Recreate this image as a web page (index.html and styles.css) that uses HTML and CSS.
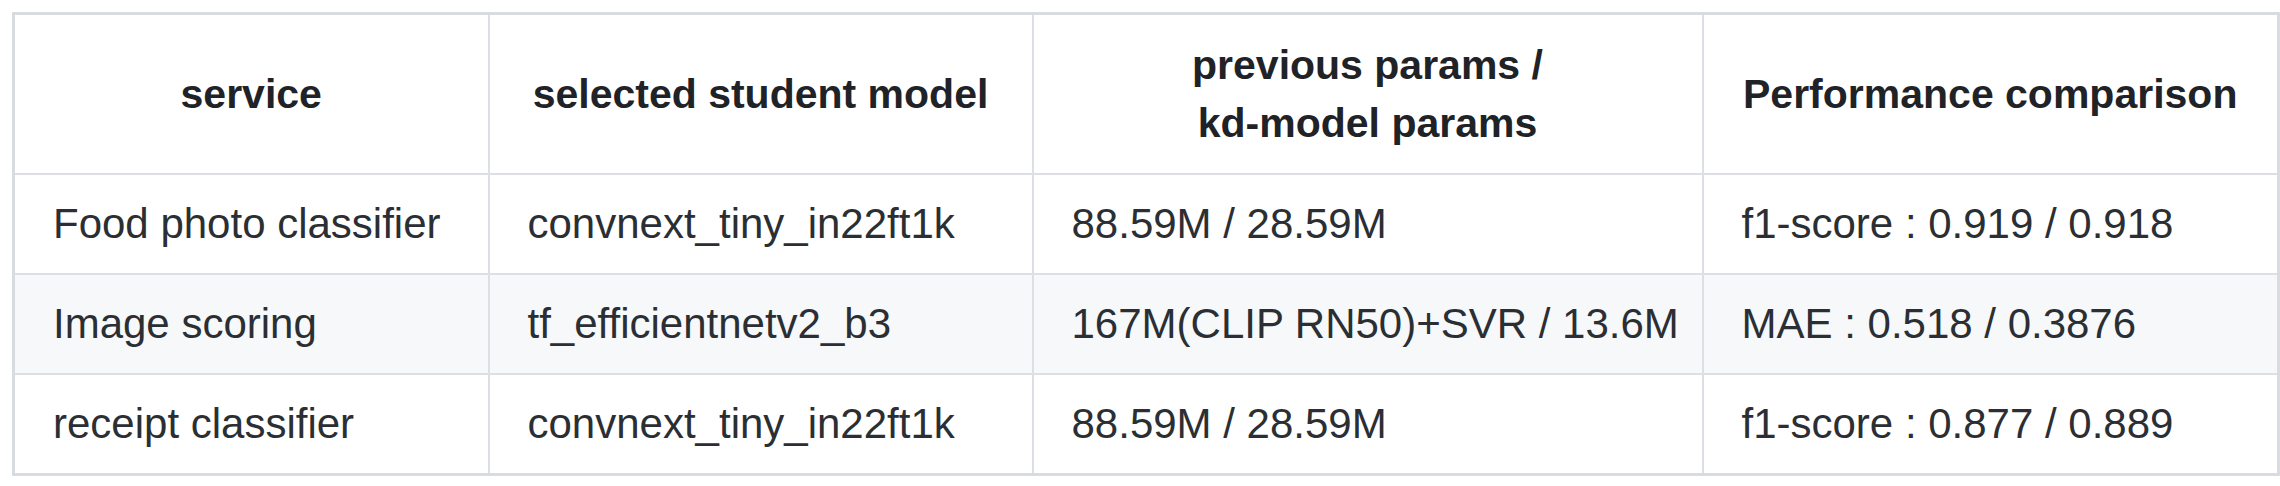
FILE: index.html
```html
<!DOCTYPE html>
<html lang="en">
<head>
<meta charset="utf-8">
<title>KD model comparison</title>
<link rel="stylesheet" href="styles.css">
</head>
<body>
<table class="kd-table">
  <colgroup>
    <col class="c-service">
    <col class="c-model">
    <col class="c-params">
    <col class="c-perf">
  </colgroup>
  <thead>
    <tr>
      <th>service</th>
      <th>selected student model</th>
      <th>previous params /<br>kd-model params</th>
      <th>Performance comparison</th>
    </tr>
  </thead>
  <tbody>
    <tr>
      <td>Food photo classifier</td>
      <td>convnext_tiny_in22ft1k</td>
      <td>88.59M / 28.59M</td>
      <td>f1-score : 0.919 / 0.918</td>
    </tr>
    <tr class="alt">
      <td>Image scoring</td>
      <td>tf_efficientnetv2_b3</td>
      <td>167M(CLIP RN50)+SVR / 13.6M</td>
      <td>MAE : 0.518 / 0.3876</td>
    </tr>
    <tr>
      <td>receipt classifier</td>
      <td>convnext_tiny_in22ft1k</td>
      <td>88.59M / 28.59M</td>
      <td>f1-score : 0.877 / 0.889</td>
    </tr>
  </tbody>
</table>
</body>
</html>
```

FILE: styles.css
```css
html, body {
  margin: 0;
  padding: 0;
  background: #ffffff;
}

body {
  padding: 12px 0 0 12px;
  font-family: "Liberation Sans", Arial, sans-serif;
  color: #25292e;
}

.kd-table {
  border-collapse: collapse;
  table-layout: fixed;
  width: 2265px;
  border: 3px solid #d8dbe0;
  font-size: 42px;
  line-height: 58px;
}

.c-service { width: 475px; }
.c-model { width: 544px; }
.c-params { width: 670px; }
.c-perf { width: 576px; }

.kd-table th,
.kd-table td {
  border: 2px solid #dcdfe4;
  padding: 20px 38px;
  white-space: nowrap;
}

.kd-table th {
  font-weight: 700;
  font-size: 41px;
  text-align: center;
  padding-top: 21px;
  padding-bottom: 21px;
  color: #1f2328;
}

.kd-table td {
  text-align: left;
  font-weight: 400;
  height: 58px;
  color: #2b2f34;
}

.kd-table tr.alt td {
  background: #f6f8fa;
}
```
